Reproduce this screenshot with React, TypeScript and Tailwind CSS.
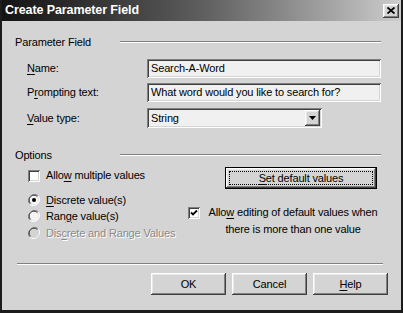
import React from 'react';

const raised =
  'bg-[#d4d4d4] shadow-[inset_-1px_-1px_#404040,inset_1px_1px_#ffffff,inset_-2px_-2px_#808080,inset_2px_2px_#e8e8e8]';
const sunken =
  'bg-[#f0f0f0] shadow-[inset_1px_1px_#808080,inset_-1px_-1px_#ffffff,inset_2px_2px_#404040,inset_-2px_-2px_#d4d4d4]';

const U: React.FC<{ children: React.ReactNode }> = ({ children }) => <span className="underline underline-offset-[2px]">{children}</span>;

const SectionHeader: React.FC<{ title: string }> = ({ title }) => (
  <div className="flex items-center h-[16px]">
    <span className="w-[105px]">{title}</span>
    <div className="flex-1 h-[2px] border-t border-[#808080] border-b border-b-white" />
  </div>
);

const Checkbox: React.FC<{ checked?: boolean }> = ({ checked }) => (
  <div className={`w-[12px] h-[12px] shrink-0 flex items-center justify-center ${sunken} bg-white`}>
    {checked && (
      <svg width="8" height="8" viewBox="0 0 8 8">
        <path d="M1 3.5 L3 5.5 L7 1.5" stroke="#000" strokeWidth="1.8" fill="none" />
      </svg>
    )}
  </div>
);

const Radio: React.FC<{ checked?: boolean; disabled?: boolean }> = ({ checked, disabled }) => (
  <svg width="12" height="12" viewBox="0 0 12 12" className="shrink-0">
    <path d="M10.2 1.8 A6 6 0 0 0 1.8 10.2" stroke="#808080" strokeWidth="1" fill="none" />
    <path d="M1.8 10.2 A6 6 0 0 0 10.2 1.8" stroke="#ffffff" strokeWidth="1" fill="none" />
    <circle cx="6" cy="6" r="4.8" fill={disabled ? '#d4d4d4' : '#f4f4f4'} />
    <path d="M9.4 2.6 A4.8 4.8 0 0 0 2.6 9.4" stroke="#404040" strokeWidth="1" fill="none" />
    {checked && <circle cx="6" cy="6" r="2" fill="#000" />}
  </svg>
);

const Button: React.FC<{ children: React.ReactNode }> = ({ children }) => (
  <div className={`w-[75px] h-[22px] flex items-center justify-center ${raised}`}>{children}</div>
);

export default function App() {
  return (
    <div
      className="w-[403px] h-[313px] bg-[#d4d4d4] border-x-2 border-b-[3px] border-[#1c1c1c] flex flex-col text-[11px] tracking-[-0.15px] text-black leading-none"
      style={{ fontFamily: '"Liberation Sans", Arial, sans-serif' }}
    >
      {/* Title bar */}
      <div className="h-[21px] shrink-0 flex items-center justify-between pl-[3px] pr-[2px] bg-gradient-to-r from-[#141414] via-[#5e5e5e] to-[#cdcdcd]">
        <span className="text-white font-bold text-[12.5px] tracking-[-0.1px]">Create Parameter Field</span>
        <div className={`w-[16px] h-[14px] flex items-center justify-center ${raised}`}>
          <svg width="8" height="7" viewBox="0 0 8 7">
            <path d="M0.5 0.5 L7.5 6.5 M7.5 0.5 L0.5 6.5" stroke="#000" strokeWidth="1.8" />
          </svg>
        </div>
      </div>

      <div className="flex-1 flex flex-col pl-[13px] pr-[20px]">
        <div className="mt-[13px]">
          <SectionHeader title="Parameter Field" />
        </div>

        <div className="flex items-center mt-[9px] h-[19px]">
          <span className="pl-[12px] w-[132px]"><U>N</U>ame:</span>
          <div className={`flex-1 h-full flex items-center pl-[4px] ${sunken}`}>Search-A-Word</div>
        </div>
        <div className="flex items-center mt-[5px] h-[19px]">
          <span className="pl-[12px] w-[132px]">P<U>r</U>ompting text:</span>
          <div className={`flex-1 h-full flex items-center pl-[4px] ${sunken}`}>What word would you like to search for?</div>
        </div>
        <div className="flex items-center mt-[6px] h-[20px]">
          <span className="pl-[12px] w-[132px]"><U>V</U>alue type:</span>
          <div className={`w-[175px] h-full flex items-center pl-[4px] pr-[2px] ${sunken}`}>
            <span className="flex-1">String</span>
            <div className={`w-[15px] h-[16px] flex items-center justify-center ${raised}`}>
              <svg width="7" height="4" viewBox="0 0 7 4">
                <path d="M0 0 H7 L3.5 4 Z" fill="#000" />
              </svg>
            </div>
          </div>
        </div>

        <div className="mt-[19px]">
          <SectionHeader title="Options" />
        </div>

        <div className="flex">
          {/* left column */}
          <div className="w-[173px] pl-[13px] flex flex-col">
            <div className="flex items-center gap-[6px] mt-[6px] h-[13px]">
              <Checkbox />
              <span>Allo<U>w</U> multiple values</span>
            </div>
            <div className="flex items-center gap-[6px] mt-[11px] h-[14px]">
              <Radio checked />
              <span><U>D</U>iscrete value(s)</span>
            </div>
            <div className="flex items-center gap-[6px] mt-[2px] h-[14px]">
              <Radio />
              <span>Ran<U>g</U>e value(s)</span>
            </div>
            <div className="flex items-center gap-[6px] mt-[3px] h-[14px] text-[#8a8a8a]">
              <Radio disabled />
              <span className="[text-shadow:1px_1px_#ffffff]">Dis<U>c</U>rete and Range Values</span>
            </div>
          </div>

          {/* right column */}
          <div className="flex-1 flex flex-col">
            <div className="mt-[4px] ml-[37px] w-[152px] h-[22px] border border-black">
              <div className={`w-full h-full p-[3px] ${raised}`}>
                <div className="w-full h-full border border-dotted border-black flex items-center justify-center">
                  <span><U>S</U>et default values</span>
                </div>
              </div>
            </div>
            <div className="flex items-start gap-[5px] mt-[18px]">
              <Checkbox checked />
              <p className="text-center leading-[17px] -mt-[3px] flex-1">
                Allo<U>w</U> editing of default values when
                <br />
                there is more than one value
              </p>
            </div>
          </div>
        </div>

        <div className="mt-auto mb-[15px] flex flex-col">
          <div className="ml-[2px] mr-[-2px] h-[2px] border-t border-[#808080] border-b border-b-white" />
          <div className="flex justify-end gap-[6px] mt-[8px] mr-[-7px]">
            <Button>OK</Button>
            <Button>Cancel</Button>
            <Button><U>H</U>elp</Button>
          </div>
        </div>
      </div>
    </div>
  );
}
